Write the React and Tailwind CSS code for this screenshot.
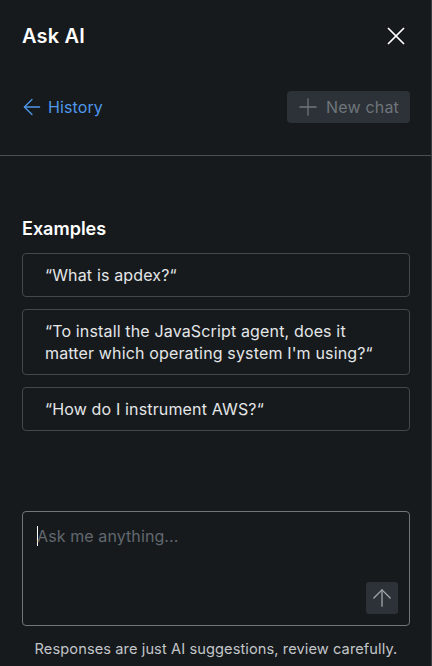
import { ArrowLeft, Plus, X, ArrowUp } from "lucide-react";

const examples = [
  "“What is apdex?“",
  "“To install the JavaScript agent, does it matter which operating system I'm using?“",
  "“How do I instrument AWS?“",
];

export default function App() {
  return (
    <div
      className="w-[432px] h-[666px] bg-[#161a1d] border-r border-[#3a3f44] text-white flex flex-col overflow-hidden"
      style={{ fontFamily: "Inter, 'Noto Sans', sans-serif" }}
    >
      <div className="flex items-center justify-between pl-[22px] pr-[20px] pt-[14px] h-[58px]">
        <h1 className="text-[20px] font-semibold tracking-[0.2px]">Ask AI</h1>
        <X size={30} strokeWidth={1.4} className="text-white" />
      </div>

      <div className="flex items-center justify-between pl-[22px] pr-[21px] mt-[33px]">
        <button className="flex items-center gap-[3px] text-[#4f97ea] text-[16px] tracking-[0.1px] -ml-[3px]">
          <ArrowLeft size={26} strokeWidth={1.2} />
          History
        </button>
        <button className="flex items-center gap-[4px] h-[32px] pl-[7px] pr-[11px] rounded-[4px] bg-[#2c3237] text-[#6f757b] text-[16px] tracking-[0.2px]">
          <Plus size={28} strokeWidth={1.1} />
          New chat
        </button>
      </div>

      <div className="mt-[32px] border-t border-[#4a4f54]" />

      <div className="pl-[22px] pr-[21px] mt-[59px]">
        <h2 className="text-[18px] font-semibold">Examples</h2>
        <div className="flex flex-col gap-[12px] mt-[11px]">
          {examples.map((e) => (
            <div
              key={e}
              className="border border-[#43484d] rounded-[4px] pl-[22px] pr-[16px] py-[10px] text-[16px] leading-[22px] tracking-[0.15px] text-[#e4e6e8]"
            >
              {e}
            </div>
          ))}
        </div>
      </div>

      <div className="pl-[22px] pr-[21px] mt-auto">
        <div className="h-[115px] border border-[#70767c] rounded-[4px] flex flex-col justify-between pl-[14px] pr-[11px] pt-[12px] pb-[11px]">
          <div className="flex items-center text-[16px] text-[#62686e] tracking-[0.1px]">
            <span className="w-[1px] h-[20px] bg-white mr-[-1px]" />
            Ask me anything...
          </div>
          <div className="flex justify-end">
            <div className="w-[32px] h-[32px] rounded-[3px] bg-[#2c3237] flex items-center justify-center text-[#a3a8ad]">
              <ArrowUp size={28} strokeWidth={1.1} />
            </div>
          </div>
        </div>
        <p className="text-center text-[14.6px] tracking-[0.1px] text-[#c3c6c9] mt-[13px] mb-[5px]">
          Responses are just AI suggestions, review carefully.
        </p>
      </div>
    </div>
  );
}
